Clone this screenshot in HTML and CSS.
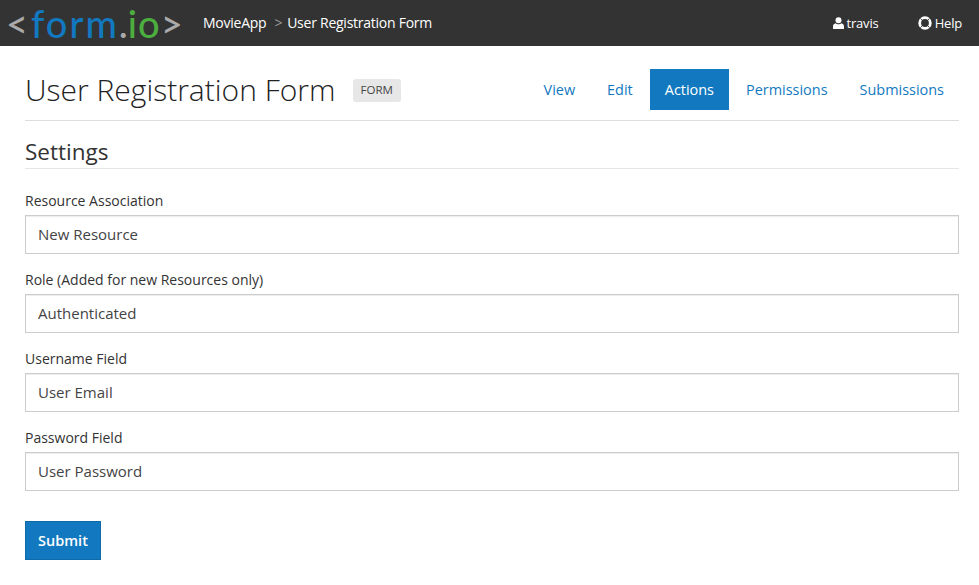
FILE: index.html
```html
<!DOCTYPE html>
<html lang="en">
<head>
  <meta charset="UTF-8" />
  <title>User Registration Form</title>
  <link rel="stylesheet" href="styles.css">
</head>
<body>

  <!-- Top bar -->
  <header class="navbar">
    <a class="logo" href="#"><span class="logo-bracket">&lt;</span><span class="logo-form">form</span><span class="logo-dot">.</span><span class="logo-io">io</span><span class="logo-bracket">&gt;</span></a>
    <nav class="crumbs">
      <a href="#">MovieApp</a>
      <span class="crumb-sep">&gt;</span>
      <a href="#">User Registration Form</a>
    </nav>
    <div class="nav-right">
      <a href="#" class="nav-user">
        <svg class="icon icon-user" width="11" height="12" viewBox="0 0 11 12"><circle cx="5.5" cy="3.2" r="3" fill="#fff"/><path d="M0 12V9.2C0 7.6 1.2 6.6 2.6 6.2 3.4 7 4.4 7.3 5.5 7.3S7.6 7 8.4 6.2C9.8 6.6 11 7.6 11 9.2V12Z" fill="#fff"/></svg>
        travis
      </a>
      <a href="#" class="nav-help">
        <svg class="icon" width="14" height="14" viewBox="0 0 14 14"><circle cx="7" cy="7" r="5.3" fill="none" stroke="#fff" stroke-width="2.8"/><path d="M2.4 2.4 5 5M11.6 2.4 9 5M2.4 11.6 5 9M11.6 11.6 9 9" stroke="#333" stroke-width="0.9"/></svg>
        Help
      </a>
    </div>
  </header>

  <main class="page">
    <!-- Form title and tabs -->
    <div class="title-row">
      <h1>User Registration Form</h1>
      <span class="badge">FORM</span>
      <ul class="tabs">
        <li><a href="#">View</a></li>
        <li><a href="#">Edit</a></li>
        <li class="active"><a href="#">Actions</a></li>
        <li><a href="#">Permissions</a></li>
        <li><a href="#">Submissions</a></li>
      </ul>
    </div>

    <h2>Settings</h2>

    <form class="settings">
      <label for="resource">Resource Association</label>
      <input type="text" id="resource" value="New Resource" />
      <label for="role">Role (Added for new Resources only)</label>
      <input type="text" id="role" value="Authenticated" />
      <label for="username">Username Field</label>
      <input type="text" id="username" value="User Email" />
      <label for="password">Password Field</label>
      <input type="text" id="password" value="User Password" />
      <button type="button">Submit</button>
    </form>
  </main>

</body>
</html>
```

FILE: styles.css
```css
body {
  font-family: 'Open Sans', sans-serif;
  font-size: 14px;
  color: #333;
  background: #fff;
  margin: 0;
  padding: 0;
}
a {
  text-decoration: none;
}
.navbar {
  height: 46px;
  background: #333;
  display: flex;
  align-items: center;
  color: #fff;
}
.navbar a {
  color: #fff;
}
.logo {
  width: 203px;
  font-family: Lato, sans-serif;
  font-size: 38px;
  font-weight: 500;
  line-height: 46px;
  white-space: nowrap;
  padding-left: 6px;
  box-sizing: border-box;
}
.navbar .logo-bracket {
  color: #aaa;
  letter-spacing: 3px;
}
.navbar .logo-form {
  color: #1279c0;
  display: inline-block;
  font-size: 38px;
  letter-spacing: 2px;
}
.navbar .logo-dot {
  color: #aaa;
}
.navbar .logo-io {
  color: #4bae3f;
  letter-spacing: 1px;
}
.crumbs {
  display: flex;
  align-items: center;
  letter-spacing: -0.25px;
  padding-bottom: 1px;
}
.crumb-sep {
  color: #999;
  margin: 0 5px 0 8px;
}
.nav-right {
  margin-left: auto;
  display: flex;
  gap: 39px;
  padding-right: 17px;
  padding-bottom: 1px;
  font-size: 13px;
  letter-spacing: -0.2px;
}
.icon {
  vertical-align: -2px;
}
.icon-user {
  vertical-align: -1px;
  margin-right: -1px;
}
.page {
  padding: 23px 20px 0 25px;
}
.title-row {
  display: flex;
  height: 51px;
  border-bottom: 1px solid #ddd;
  align-items: flex-start;
}
h1 {
  font-size: 30px;
  font-weight: 300;
  line-height: 41px;
  margin: 0;
  color: #222;
}
.badge {
  margin: 10px 0 0 17px;
  padding: 0 8px;
  height: 23px;
  line-height: 22px;
  font-size: 11.5px;
  background: #e7e7e7;
  border-radius: 3px;
  color: #444;
}
.tabs {
  list-style: none;
  display: flex;
  margin: 0 0 0 auto;
  padding: 0;
}
.tabs a {
  display: block;
  height: 41px;
  line-height: 41px;
  padding: 0 15px;
  font-size: 14.45px;
  color: #1279c0;
}
.tabs li {
  margin-left: 2px;
}
.tabs .active a {
  background: #1279c0;
  color: #fff;
}
h2 {
  font-size: 22.5px;
  font-weight: 400;
  line-height: 30px;
  margin: 16px 0 0;
  padding-bottom: 1px;
  border-bottom: 1px solid #e5e5e5;
  color: #333;
}
.settings {
  display: flex;
  flex-direction: column;
  align-items: flex-start;
  padding-top: 22px;
}
label {
  font-size: 14px;
  line-height: 20px;
  margin-bottom: 4px;
}
input {
  width: 100%;
  height: 39px;
  box-sizing: border-box;
  border: 1px solid #ccc;
  padding: 0 12px 2px;
  margin-bottom: 16px;
  font-family: inherit;
  font-size: 15px;
  color: #444;
  box-shadow: inset 0 1px 1px rgba(0, 0, 0, 0.075);
}
button {
  margin-top: 14px;
  width: 76px;
  height: 39px;
  background: #1279c0;
  color: #fff;
  border: 1px solid #106aa8;
  font-family: inherit;
  font-size: 14.5px;
  font-weight: 600;
  padding: 0;
}
```
